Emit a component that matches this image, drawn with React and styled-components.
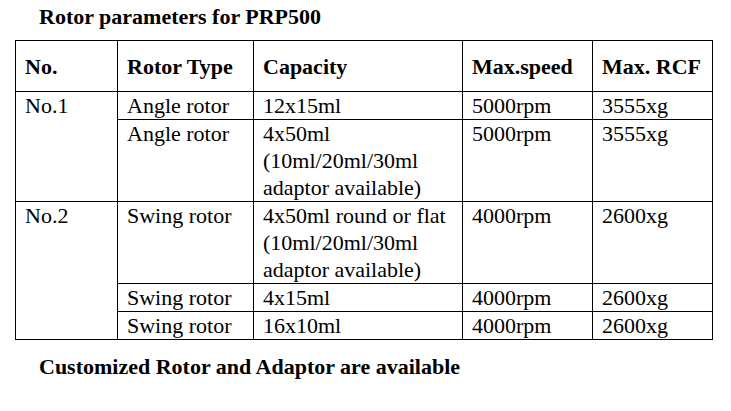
import React from 'react';
import styled, { createGlobalStyle } from 'styled-components';

const serif = '"Liberation Serif", Tinos, "Times New Roman", Times, "DejaVu Serif", serif';

const GlobalStyle = createGlobalStyle`
  html, body {
    margin: 0;
    padding: 0;
    background: #fff;
  }
  body {
    font-family: ${serif};
    color: #000;
  }
`;

const columns = [102, 136, 209, 130, 120];

const headers = ['No.', 'Rotor Type', 'Capacity', 'Max.speed', 'Max. RCF'];

const groups = [
  {
    no: 'No.1',
    rotors: [
      { type: 'Angle rotor', capacity: ['12x15ml'], speed: '5000rpm', rcf: '3555xg' },
      {
        type: 'Angle rotor',
        capacity: ['4x50ml', '(10ml/20ml/30ml', 'adaptor available)'],
        speed: '5000rpm',
        rcf: '3555xg',
      },
    ],
  },
  {
    no: 'No.2',
    rotors: [
      {
        type: 'Swing rotor',
        capacity: ['4x50ml round or flat', '(10ml/20ml/30ml', 'adaptor available)'],
        speed: '4000rpm',
        rcf: '2600xg',
      },
      { type: 'Swing rotor', capacity: ['4x15ml'], speed: '4000rpm', rcf: '2600xg' },
      { type: 'Swing rotor', capacity: ['16x10ml'], speed: '4000rpm', rcf: '2600xg' },
    ],
  },
];

function App() {
  return (
    <>
      <GlobalStyle />
      <Page>
        <Heading>Rotor parameters for PRP500</Heading>
        <Table>
          <colgroup>
            {columns.map((w) => (
              <col key={w} style={{ width: w }} />
            ))}
          </colgroup>
          <thead>
            <tr>
              {headers.map((h) => (
                <HeadCell key={h}>{h}</HeadCell>
              ))}
            </tr>
          </thead>
          <tbody>
            {groups.map((g) => g.rotors.map((r, i) => (
              <tr key={`${g.no}-${i}`}>
                {i === 0 && <Cell rowSpan={g.rotors.length}>{g.no}</Cell>}
                <Cell>{r.type}</Cell>
                <Cell>
                  {r.capacity.map((line, k) => (
                    <React.Fragment key={line}>
                      {k > 0 && <br />}
                      {line}
                    </React.Fragment>
                  ))}
                </Cell>
                <Cell>{r.speed}</Cell>
                <Cell>{r.rcf}</Cell>
              </tr>
            )))}
          </tbody>
        </Table>
        <Note>Customized Rotor and Adaptor are available</Note>
      </Page>
    </>
  );
}

const Page = styled.div`
  padding: 4px 0 0 15px;
  width: 731px;
  height: 411px;
  box-sizing: border-box;
  font-family: ${serif};
  color: #000;
`;

const Heading = styled.div`
  margin-left: 24px;
  font-family: ${serif};
  font-size: 22px;
  font-weight: bold;
  line-height: 26px;
`;

const Table = styled.table`
  margin-top: 10px;
  width: 697px;
  table-layout: fixed;
  border-collapse: collapse;
  font-family: ${serif};
  font-size: 22px;
  line-height: 27px;
`;

const HeadCell = styled.th`
  border: 1px solid #000;
  padding: 12px 4px 11px 9px;
  text-align: left;
  vertical-align: top;
  font-family: ${serif};
  font-weight: bold;
  white-space: nowrap;
`;

const Cell = styled.td`
  border: 1px solid #000;
  padding: 0 4px 0 9px;
  text-align: left;
  vertical-align: top;
  font-family: ${serif};
  white-space: nowrap;
`;

const Note = styled.div`
  margin: 14px 0 0 24px;
  font-family: ${serif};
  font-size: 22px;
  font-weight: bold;
  line-height: 26px;
`;

export default App;
